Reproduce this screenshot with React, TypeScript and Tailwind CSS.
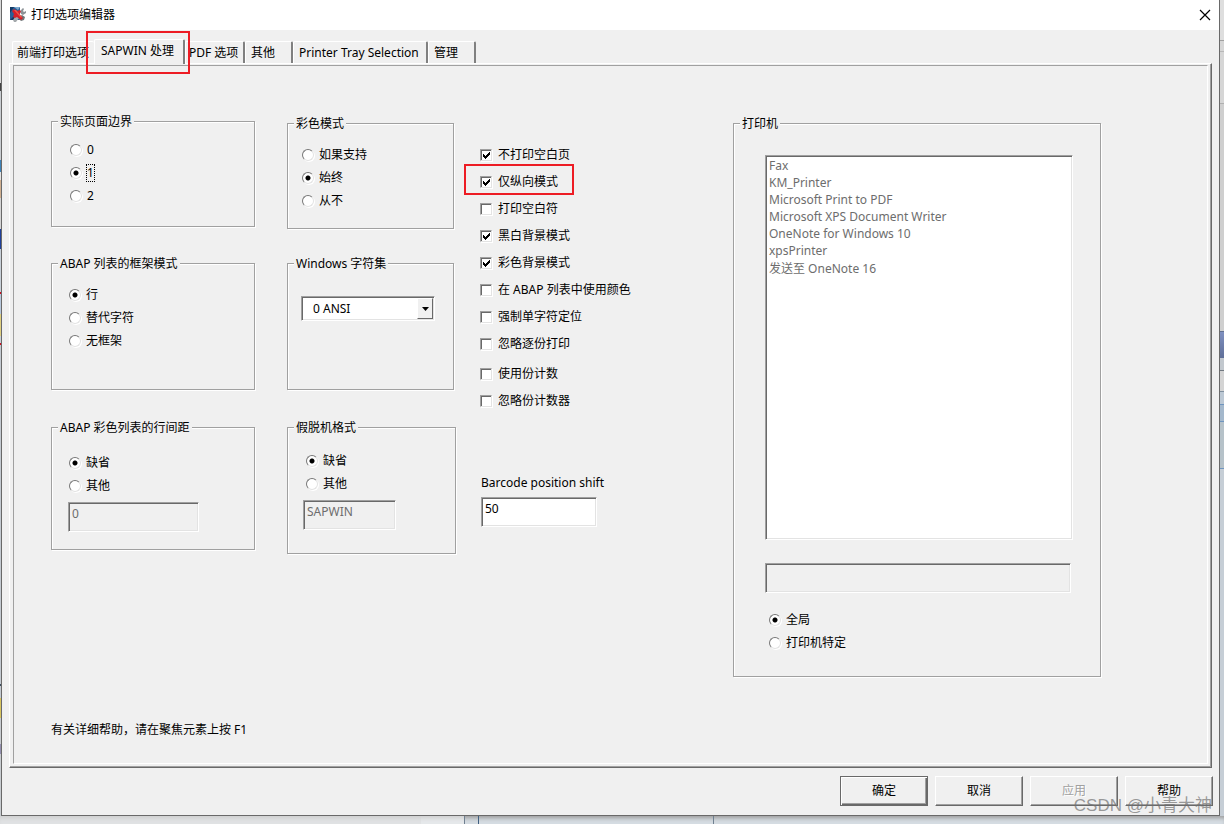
import React from 'react';
import clsx from 'clsx';

const tabs = [
  { label: '前端打印选项', width: 'w-[82px] pl-1 border-r-0' },
  { label: 'SAPWIN 处理', width: 'w-[91px] pl-1.5 border-r-2', selected: true },
  { label: 'PDF 选项', width: 'w-[60px] pl-[3px] border-r-2' },
  { label: '其他', width: 'w-12 pl-[5px] border-r-2' },
  { label: 'Printer Tray Selection', width: 'w-[135px] pl-[5px] border-r-2' },
  { label: '管理', width: 'w-12 pl-[5px] border-r-2' },
];

const modeOptions = [
  { label: '不打印空白页', checked: true },
  { label: '仅纵向模式', checked: true, marked: true },
  { label: '打印空白符' },
  { label: '黑白背景模式', checked: true },
  { label: '彩色背景模式', checked: true },
  { label: '在 ABAP 列表中使用颜色' },
  { label: '强制单字符定位' },
  { label: '忽略逐份打印' },
];

const copyOptions = [{ label: '使用份计数' }, { label: '忽略份计数器' }];

const printers = [
  'Fax',
  'KM_Printer',
  'Microsoft Print to PDF',
  'Microsoft XPS Document Writer',
  'OneNote for Windows 10',
  'xpsPrinter',
  '发送至 OneNote 16',
];

const leftStrip = [
  'h-[83px] bg-[#d9d9d9]',
  'h-2 bg-[#444]',
  'h-[69px] bg-[#c9cdd1]',
  'h-3 bg-[#3f83b8]',
  'h-2 bg-[#e4e4e4]',
  'h-[18px] bg-[#d0b090]',
  'h-[31px] bg-[#d4d4d4]',
  'h-5 bg-[#20409a]',
  'h-[43px] bg-[#c8d0d8]',
  'h-0.5 bg-[#d01020]',
  'h-5 bg-[#b8c8dc]',
  'h-[22px] bg-[#e0d080]',
  'h-[7px] bg-[#c8d0d8]',
  'h-0.5 bg-[#d01020]',
  'h-[339px] bg-[#c4cad1]',
  'h-0.5 bg-[#405060]',
  'h-3 bg-[#c4cad1]',
  'h-5 bg-[#d8c560]',
  'h-[26px] bg-[#c8ccd0]',
  'h-2.5 bg-[#9490b0]',
];

const rightStrip = [
  'h-10 bg-[#dedede]',
  'h-px bg-[#a0a0a0]',
  'h-2.5 bg-[#d6d6d6]',
  'h-px bg-[#b8b8b8]',
  'h-[51px] bg-[#d6d6d6]',
  'h-px bg-[#b0b0b0]',
  'h-[227px] bg-[#cfcfcf]',
  'h-px bg-[#607090]',
  'h-[26px] bg-linear-to-b from-[#7f90c0] to-[#5f6f98]',
  'h-3 bg-[#c2c8ce]',
  'h-px bg-[#707880]',
  'h-5 bg-[#d4d4d4]',
  'h-px bg-[#8090a0]',
  'h-3 bg-[#bcc8d4]',
  'h-px bg-[#6f95bf]',
  'h-4 bg-[#a4b8cc]',
  'h-px bg-[#6f95bf]',
  'h-[46px] bg-[#b6c2c9]',
  'h-px bg-[#6f95bf]',
];

const sunken =
  'border border-t-[#a0a0a0] border-l-[#a0a0a0] border-r-white border-b-white shadow-[inset_1px_1px_0_#696969,inset_-1px_-1px_0_#e3e3e3]';

const AppIcon = () => (
  <svg className="w-4 h-4" viewBox="0 0 16 16" aria-hidden="true">
    <path d="M0 0h10v13H0z" fill="#2b5f96" />
    <path d="M0 0h4L0 6zM0 13l4-4v4z" fill="#123a66" />
    <path d="M4 0h6L8 3z" fill="#7fa9cf" />
    <path d="M10 4l3-3 1 1-1 2 1 1 2-1v2l-3 2-2-1z" fill="#8c9296" />
    <path d="M3 13l3-4 3 2-3 4-2 0z" fill="#a4a9ac" />
    <path d="M9 10l3-2 3 2-1 3-3 1-2-2z" fill="#6f7477" />
    <path d="M2 4l2-2 3 2 3-1 1 2-2 2 4 4-2 2-4-3-2 1-2-1 1-3z" fill="#d3202a" />
    <path d="M4 3l2 0 6 7-1 1z" fill="#ef5548" />
  </svg>
);

type GroupProps = { title: string; className?: string; children: React.ReactNode };

const Group = ({ title, className, children }: GroupProps) => (
  <fieldset
    className={clsx(
      'min-w-0 border border-[#a0a0a0] shadow-[1px_1px_0_#fff,inset_1px_1px_0_#fff]',
      className,
    )}
  >
    <legend className="ml-1.5 px-0.5 bg-[#f0f0f0] leading-[17px]">{title}</legend>
    {children}
  </fieldset>
);

type RadioListProps = {
  name: string;
  options: string[];
  selected: number;
  focused?: boolean;
  className?: string;
};

const RadioList = ({ name, options, selected, focused, className }: RadioListProps) => (
  <div className={className}>
    {options.map((option, i) => (
      <label key={option} className="flex items-center gap-[5px] h-[23px]">
        <input
          type="radio"
          name={name}
          defaultChecked={i === selected}
          className="appearance-none size-3 rounded-full bg-white border border-t-[#777] border-l-[#777] border-r-[#e3e3e3] border-b-[#e3e3e3] shadow-[1px_1px_0_#fff] checked:bg-[radial-gradient(circle,#000_2px,#fff_3px)]"
        />
        <span className={clsx(focused && i === selected && 'outline outline-dotted outline-black')}>
          {option}
        </span>
      </label>
    ))}
  </div>
);

type CheckRowProps = { label: string; checked?: boolean; marked?: boolean };

const CheckRow = ({ label, checked, marked }: CheckRowProps) => (
  <label className="relative flex items-center gap-1.5 h-[27px]">
    <span className="relative flex">
      <input
        type="checkbox"
        defaultChecked={checked}
        className="peer appearance-none size-3 bg-white border border-t-[#a0a0a0] border-l-[#a0a0a0] border-r-[#e3e3e3] border-b-[#e3e3e3] shadow-[1px_1px_0_#fff,inset_1px_1px_0_#696969]"
      />
      <svg
        className="absolute inset-0 size-3 pointer-events-none hidden peer-checked:block"
        viewBox="0 0 12 12"
        shapeRendering="crispEdges"
        aria-hidden="true"
      >
        <path
          d="M3 5h1v1h1v1h1v-1h1v-1h1v-1h1v-1h1v3h-1v1h-1v1h-1v1h-1v1h-1v-1h-1v-1h-1z"
          fill="#000"
        />
      </svg>
    </span>
    {label}
    {marked && <span className="absolute -left-4 -top-1 w-[110px] h-[31px] border-2 border-[#ed1c24]" />}
  </label>
);

const buttonBase = 'w-[88px] h-[30px] border';
const raised =
  'border-t-white border-l-white border-r-[#696969] border-b-[#696969] shadow-[inset_-1px_-1px_0_#a0a0a0]';

const App = () => {
  return (
    <div className="relative flex flex-col min-h-screen overflow-hidden bg-[#d5dce2] text-xs text-black font-['Noto_Sans','Noto_Sans_CJK_SC',sans-serif]">
      <div className="flex flex-1">
        <div className="w-px bg-[#c8ccd0]">
          {leftStrip.map((segment, i) => (
            <div key={i} className={segment} />
          ))}
        </div>

        <main className="flex flex-col flex-1 bg-[#f0f0f0] border-x border-b border-[#696969]">
          <header className="flex items-center h-[30px] pl-2 pr-2 bg-white">
            <AppIcon />
            <h1 className="ml-[5px]">打印选项编辑器</h1>
            <button aria-label="关闭" className="ml-auto">
              <svg className="w-3 h-3" viewBox="0 0 12 12" aria-hidden="true">
                <path d="M1 1l10 10M11 1L1 11" stroke="#000" strokeWidth="1.2" />
              </svg>
            </button>
          </header>

          <nav role="tablist" className="flex items-end h-[33px] pl-2.5">
            {tabs.map(({ label, width, selected }) => (
              <button
                key={label}
                role="tab"
                aria-selected={!!selected}
                className={clsx(
                  'text-left whitespace-nowrap rounded-t-xs border-t border-l border-t-white border-l-white border-r-[#808080] bg-[#f0f0f0]',
                  width,
                  selected ? 'relative z-10 h-[25px] -mb-px pb-0.5' : 'h-[22px]',
                )}
              >
                {label}
                {selected && (
                  <span className="absolute -left-[9px] -top-[9px] w-[104px] h-[43px] border-2 border-[#ed1c24]" />
                )}
              </button>
            ))}
          </nav>

          <div className="flex flex-1 mx-[7px] border border-t-white border-l-white border-r-[#696969] border-b-[#696969]">
            <div className="flex flex-1 pt-px pl-[3px] pr-0.5 pb-0.5 border-r border-b border-[#a0a0a0]">
              <section className="flex flex-col flex-1 pl-[37px] pr-[106px] pt-[47px] pb-[25px] border border-t-[#a0a0a0] border-l-[#a0a0a0] border-r-white border-b-white">
                <div className="flex items-start">
                  <div className="w-[204px] shrink-0">
                    <Group title="实际页面边界" className="h-[114px]">
                      <RadioList
                        name="margin"
                        options={['0', '1', '2']}
                        selected={1}
                        focused
                        className="pl-[18px] pt-2"
                      />
                    </Group>
                    <Group title="ABAP 列表的框架模式" className="h-[135px] mt-7">
                      <RadioList
                        name="frame"
                        options={['行', '替代字符', '无框架']}
                        selected={0}
                        className="pl-[17px] pt-[11px]"
                      />
                    </Group>
                    <Group title="ABAP 彩色列表的行间距" className="h-[131px] mt-[29px]">
                      <RadioList
                        name="spacing"
                        options={['缺省', '其他']}
                        selected={0}
                        className="pl-[17px] pt-[15px]"
                      />
                      <input
                        aria-label="行间距"
                        disabled
                        defaultValue="0"
                        className={clsx('w-[131px] h-[30px] ml-4 mt-[5px] pl-[3px] pb-2 text-[#6d6d6d]', sunken)}
                      />
                    </Group>
                  </div>

                  <div className="w-[169px] shrink-0 ml-8 mt-0.5">
                    <Group title="彩色模式" className="w-[167px] h-[114px]">
                      <RadioList
                        name="color"
                        options={['如果支持', '始终', '从不']}
                        selected={1}
                        className="pl-3.5 pt-[11px]"
                      />
                    </Group>
                    <Group title="Windows 字符集" className="w-[167px] h-[135px] mt-[26px]">
                      <div className={clsx('relative w-[134px] h-[25px] ml-[13px] mt-6 p-px bg-white', sunken)}>
                        <select
                          aria-label="Windows 字符集"
                          className="appearance-none w-full h-full pl-2.5 bg-transparent"
                        >
                          <option>0 ANSI</option>
                        </select>
                        <span className="absolute right-px inset-y-px flex items-center justify-center w-4 bg-[#f0f0f0] border border-t-white border-l-white border-r-[#696969] border-b-[#696969] pointer-events-none">
                          <svg className="w-[7px] h-1" viewBox="0 0 7 4" aria-hidden="true">
                            <path d="M0 0h7L3.5 4z" />
                          </svg>
                        </span>
                      </div>
                    </Group>
                    <Group title="假脱机格式" className="h-[135px] mt-[29px]">
                      <RadioList
                        name="spool"
                        options={['缺省', '其他']}
                        selected={0}
                        className="pl-[18px] pt-[13px]"
                      />
                      <input
                        aria-label="假脱机格式"
                        disabled
                        defaultValue="SAPWIN"
                        className={clsx('w-[93px] h-[30px] ml-[15px] mt-[5px] pl-[3px] pb-2 text-[#6d6d6d]', sunken)}
                      />
                    </Group>
                  </div>

                  <div className="flex-1 ml-6 mt-7">
                    {modeOptions.map((option) => (
                      <CheckRow key={option.label} {...option} />
                    ))}
                    <div className="mt-[3px]">
                      {copyOptions.map((option) => (
                        <CheckRow key={option.label} {...option} />
                      ))}
                    </div>
                    <div className="pl-px pt-[61px]">
                      <label htmlFor="barcode" className="block">
                        Barcode position shift
                      </label>
                      <input
                        id="barcode"
                        defaultValue="50"
                        className={clsx('block w-[116px] h-[30px] mt-1.5 pl-[3px] pb-2 bg-white', sunken)}
                      />
                    </div>
                  </div>

                  <Group title="打印机" className="w-[368px] h-[562px] shrink-0 mt-0.5">
                    <div className="pl-[31px] pt-[23px]">
                      <select
                        multiple
                        disabled
                        aria-label="打印机"
                        className={clsx(
                          'block w-[308px] h-[385px] p-px pl-[3px] bg-white opacity-100 overflow-hidden',
                          sunken,
                        )}
                      >
                        {printers.map((printer) => (
                          <option key={printer} className="h-[17px] p-0 leading-[17px] text-[#6d6d6d]">
                            {printer}
                          </option>
                        ))}
                      </select>
                      <input
                        aria-label="打印机名称"
                        disabled
                        className={clsx('block w-[306px] h-[30px] mt-[23px]', sunken)}
                      />
                      <RadioList
                        name="scope"
                        options={['全局', '打印机特定']}
                        selected={0}
                        className="pl-1 pt-[15px]"
                      />
                    </div>
                  </Group>
                </div>

                <p className="mt-auto">有关详细帮助，请在聚焦元素上按 F1</p>
              </section>
            </div>
          </div>

          <footer className="flex justify-end gap-[7px] pt-2 pr-1.5 pb-[9px]">
            <button
              className={clsx(
                buttonBase,
                'border-[#696969] shadow-[inset_1px_1px_0_#fff,inset_-1px_-1px_0_#696969,inset_-2px_-2px_0_#a0a0a0]',
              )}
            >
              确定
            </button>
            <button className={clsx(buttonBase, raised)}>取消</button>
            <button disabled className={clsx(buttonBase, raised, 'text-[#a0a0a0] text-shadow-[1px_1px_0_#fff]')}>
              应用
            </button>
            <button className={clsx(buttonBase, raised)}>帮助</button>
          </footer>
        </main>

        <div className="w-1 bg-[#c6ced6]">
          {rightStrip.map((segment, i) => (
            <div key={i} className={segment} />
          ))}
        </div>
      </div>

      <div className="flex h-2 shadow-[inset_0_4px_4px_-2px_#9a9a9a]">
        <div className="w-[421px] bg-[#e4e4e4]/70" />
        <div className="w-11 bg-[#f0f0f0]/60 border-r border-[#708090]" />
        <div className="w-3.5 border-r border-[#406080]" />
        <div className="w-[235px] border-r border-[#708090]" />
      </div>

      <p className="absolute right-3 bottom-1.5 text-[17px] leading-6 text-[#707070]/70 font-['Liberation_Sans','Noto_Sans_CJK_SC',sans-serif]">
        CSDN @小青大神
      </p>
    </div>
  );
};

export default App;
